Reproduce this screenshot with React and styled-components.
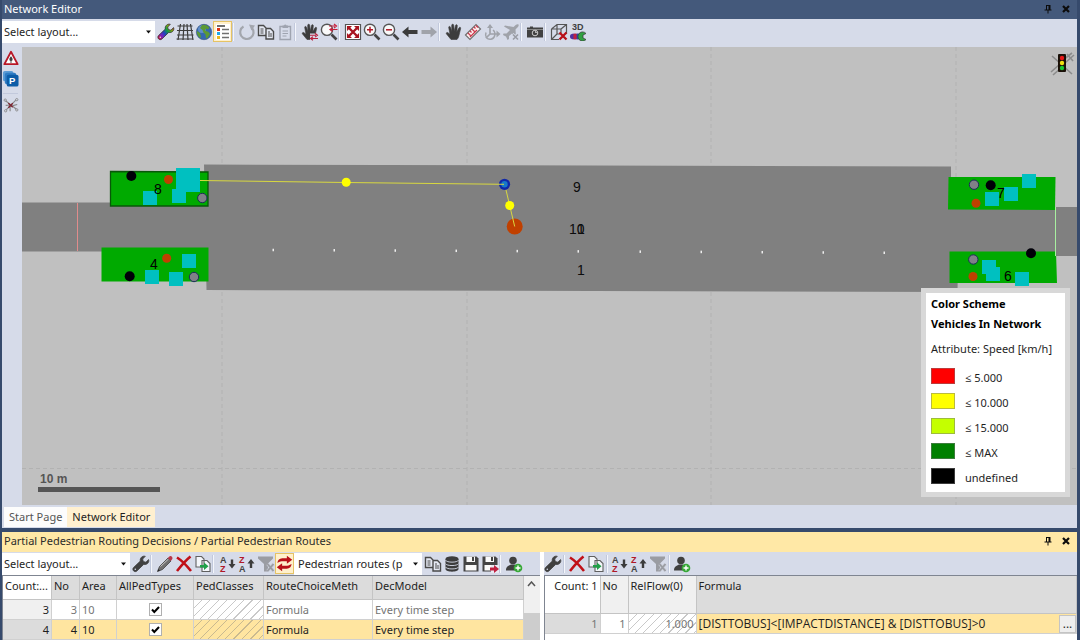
import React from 'react';
import styled, { createGlobalStyle } from 'styled-components';

const GlobalStyle = createGlobalStyle`
  * {
    box-sizing: border-box;
  }

  body {
    margin: 0;
    font-family: 'Noto Sans', 'Open Sans', sans-serif;
    font-size: 11px;
    line-height: 16px;
    color: #1e1e1e;
  }

  button,
  select,
  input {
    font: inherit;
    color: inherit;
  }
`;

const Page = styled.div`
  display: flex;
  flex-direction: column;
  min-height: 100vh;
  background: #fff;
`;

const Frame = styled.section`
  display: flex;
  flex-direction: column;
  flex: ${(props) => (props.$grow ? '1 1 auto' : '0 0 auto')};
  border: solid #364a6c;
  border-width: ${(props) => (props.$grow ? '0 3px 0 2px' : '4px 3px 0 2px')};
  background: #d6dbe9;
`;

const TitleBar = styled.header`
  display: flex;
  align-items: center;
  height: ${(props) => (props.$active ? '20px' : '19px')};
  padding: 0 6px 2px 2px;
  background: ${(props) => (props.$active ? '#ffe8a6' : '#44597b')};
  color: ${(props) => (props.$active ? '#2b2b2b' : '#fff')};
`;

const Title = styled.h2`
  flex: 1;
  margin: 0;
  font-size: 11px;
  font-weight: 400;
  white-space: nowrap;
`;

const TitleButton = styled.button`
  display: flex;
  padding: 0;
  margin-left: 8px;
  border: 0;
  background: none;
  color: #0c0c0c;
`;

const Toolbar = styled.div`
  display: flex;
  align-items: center;
  height: ${(props) => (props.$tall ? '28px' : '23px')};
  padding-bottom: ${(props) => (props.$tall ? '3px' : '0')};
`;

const ToolButton = styled.button`
  display: flex;
  flex: none;
  align-items: center;
  justify-content: center;
  width: 19px;
  height: 21px;
  padding: 0;
  border: 1px solid ${(props) => (props.$on ? '#e5c365' : 'transparent')};
  background: ${(props) => (props.$on ? '#fff0cc' : 'none')};

  svg {
    flex: none;
  }
`;

const Separator = styled.span`
  flex: none;
  width: ${(props) => (props.$wide ? '6px' : '5px')};
  height: 18px;
  border-left: 1px solid #c2c9dc;
  box-shadow: inset 1px 0 0 #f4f6fb;
`;

const SelectWrap = styled.label`
  position: relative;
  flex: none;
  width: ${(props) => (props.$wide ? '153px' : '128px')};
  margin-right: 1px;

  select {
    display: block;
    width: 100%;
    height: 22px;
    padding: 0 16px 0 ${(props) => (props.$inset ? '4px' : '2px')};
    border: 0;
    border-radius: 0;
    background: #fff;
    appearance: none;
  }

  svg {
    position: absolute;
    right: 4px;
    top: 9px;
    pointer-events: none;
  }
`;

const Workspace = styled.div`
  display: flex;
  flex: 1;
`;

const SideBar = styled.div`
  display: flex;
  flex-direction: column;
  align-items: center;
  width: 20px;
  padding-right: 3px;
`;

const SideSeparator = styled.span`
  width: 15px;
  height: 5px;
  border-bottom: 1px solid #c2c9dc;
`;

const Canvas = styled.div`
  position: relative;
  flex: 1;
  min-height: 260px;
  background: #c0c0c0;
`;

const NetworkSvg = styled.svg`
  position: absolute;
  width: 100%;
  height: 100%;
  font-family: 'Liberation Sans', Arial, sans-serif;
  font-size: 14px;
`;

const Legend = styled.aside`
  position: absolute;
  right: 7px;
  bottom: 8px;
  width: 149px;
  padding: 1px 5px 2px;
  border: 5px solid #d8d8d8;
  background: #fff;
  background-clip: padding-box;
`;

const LegendTitle = styled.div`
  font-weight: 700;
  line-height: 20px;
  color: #000;
`;

const LegendAttribute = styled.div`
  margin: 6px 0 7px;
  line-height: 18px;
  white-space: nowrap;
`;

const LegendList = styled.ul`
  margin: 0;
  padding: 0;
  list-style: none;
`;

const LegendItem = styled.li`
  display: flex;
  gap: 10px;
  height: 25px;
  line-height: 25px;
`;

const Swatch = styled.span`
  width: 24px;
  height: 16px;
  margin-top: 3px;
  border: 1px solid rgba(120, 120, 120, 0.5);
  background: ${(props) => props.$color};
`;

const Tabs = styled.nav`
  display: flex;
  height: 23px;
  padding: 2px 2px 1px;
`;

const Tab = styled.a`
  padding: 0 5px;
  line-height: 20px;
  color: ${(props) => (props.$on ? '#1e1e1e' : '#555')};
  background: ${(props) => (props.$on ? '#fff0d0' : '#fcfcfc')};
  text-decoration: none;
`;

const Lists = styled.div`
  display: grid;
  grid-template-columns: 1fr 1fr;
`;

const ListPane = styled.div`
  display: flex;
  flex-direction: column;
  min-width: 0;
  border-left: ${(props) => (props.$second ? '4px solid #fff' : '0')};
`;

const GridArea = styled.div`
  display: flex;
  flex: 1;
  border-top: 1px solid #7f8591;
  border-left: 1px solid #7f8591;
  background: #fff;
  overflow: hidden;
`;

const Table = styled.table`
  flex: 1;
  align-self: flex-start;
  min-width: 0;
  table-layout: fixed;
  border-collapse: separate;
  border-spacing: 0;
`;

const HeadCell = styled.th`
  height: ${(props) => (props.$tall ? '38px' : '24px')};
  padding: 2px 2px 0;
  border-right: 1px solid #c4c4c4;
  border-bottom: 1px solid #c4c4c4;
  background: ${(props) => props.$bg || '#dcdcdc'};
  font-weight: 400;
  text-align: ${(props) => (props.$right ? 'right' : 'left')};
  vertical-align: top;
  white-space: nowrap;
  overflow: hidden;
`;

const cellColors = {
  plain: '#fff',
  picked: '#ffe5a0',
  head: '#dcdcdc',
  soft: '#f0f0f0',
};

const Cell = styled.td`
  height: 20px;
  padding: 0 2px;
  border-right: 1px solid #d0d0d0;
  border-bottom: 1px solid #d0d0d0;
  background-color: ${(props) => cellColors[props.$tone || 'plain']};
  background-image: ${(props) =>
    props.$hatched
      ? 'repeating-linear-gradient(135deg, transparent 0 5px, rgba(120, 120, 120, 0.4) 5px 6px)'
      : 'none'};
  color: ${(props) => (props.$dim ? '#757575' : '#1e1e1e')};
  text-align: ${(props) => props.$align || 'left'};
  white-space: nowrap;
`;

const CheckBox = styled.input`
  display: block;
  width: 13px;
  height: 13px;
  margin: 0 auto;
  border: 1px solid #b0b0b0;
  background: #fff
    url("data:image/svg+xml,%3Csvg xmlns='http://www.w3.org/2000/svg' viewBox='0 0 11 11'%3E%3Cpath d='M2 5.5 4.3 8 9 3' fill='none' stroke='black' stroke-width='2'/%3E%3C/svg%3E");
  appearance: none;
`;

const ScrollBar = styled.div`
  display: flex;
  flex-direction: column;
  width: 16px;
  background: #f0f0f0;
`;

const ScrollButton = styled.button`
  display: flex;
  justify-content: center;
  width: 100%;
  height: 37px;
  padding: 5px 0 0;
  border: 0;
  background: none;
`;

const ScrollThumb = styled.div`
  flex: 1;
  background: #cdcdcd;
`;

const FormulaBox = styled.div`
  display: flex;
  justify-content: space-between;
  font-family: 'Open Sans', sans-serif;
  font-size: 12px;
  line-height: 18px;
`;

const MoreButton = styled.button`
  width: 17px;
  height: 18px;
  margin-right: -2px;
  padding: 0;
  border: 1px solid #c4c4c4;
  background: #eee;
  line-height: 14px;
`;

const Footer = styled.div`
  height: 2px;
`;

const Icon = ({ children, size = 18 }) => (
  <svg width={size} height={size} viewBox="0 0 18 18" fill="none" aria-hidden="true">
    {children}
  </svg>
);

const WRENCH =
  'M16.6 4.6 13.9 7.2 11.3 6.6 10.7 4 13.3 1.3C10.5.5 7.6 2.8 8.3 6.1L1.5 12.6C.6 13.6.7 15 1.6 15.9 2.5 16.8 3.9 16.9 4.9 16L11.7 9.4C15 10.2 17.6 7.4 16.6 4.6Z';

const Wrench = ({ rainbow }) => (
  <Icon>
    <defs>
      <linearGradient id="spectrum" x1="1" y1="15" x2="16" y2="3" gradientUnits="userSpaceOnUse">
        <stop offset="0" stopColor="#d01030" />
        <stop offset="0.22" stopColor="#7a20c0" />
        <stop offset="0.42" stopColor="#2040c0" />
        <stop offset="0.62" stopColor="#10a040" />
        <stop offset="0.8" stopColor="#80b010" />
        <stop offset="1" stopColor="#c02010" />
      </linearGradient>
    </defs>
    <path
      d={WRENCH}
      fill={rainbow ? 'url(#spectrum)' : '#404040'}
      stroke={rainbow ? '#333' : '#404040'}
      strokeWidth="0.8"
    />
    <circle cx="3.3" cy="14.3" r="0.8" fill="#d6dbe9" />
  </Icon>
);

const GridIcon = () => (
  <Icon>
    <path
      d="M4.5 1 2 17M8 1 7 17M11 1l1 16M14.5 1 17 17M1.5 3h15M1 7.5h16M1 12h16.5M.5 16h17"
      stroke="#3c3c3c"
      strokeWidth="1.2"
    />
  </Icon>
);

const Globe = () => (
  <Icon>
    <circle cx="9" cy="9" r="7.7" fill="#3568b0" />
    <circle cx="7" cy="6" r="4" fill="#7ba8dc" opacity="0.6" />
    <path
      d="M7 2c3-1 6 .5 7.5 2.5L13 6.5l-2-1-1 2 3.5 1.5 1.5 2-2.5 4-1.5.5-.5-4-2-2L7.5 7 5 5ZM2 8l3 2 1 4-1 1C3 13.5 1.5 11 2 8Z"
      fill="#5c9a34"
    />
    <circle cx="9" cy="9" r="7.7" stroke="#3b5278" strokeWidth="0.6" />
  </Icon>
);

const LegendIcon = () => (
  <Icon>
    <path d="M2 1h14v16H2Z" fill="#fff" />
    <path d="M3 3h8" stroke="#404040" strokeWidth="1.5" />
    <path d="M3 6.5h3" stroke="#e03010" strokeWidth="3" />
    <path d="M3 10.5h3" stroke="#20a8e8" strokeWidth="3" />
    <path d="M3 14.5h3" stroke="#e8b820" strokeWidth="3" />
    <path d="M8 6.5h7M8 10.5h7M8 14.5h7" stroke="#707070" strokeWidth="1.3" />
  </Icon>
);

const Refresh = () => (
  <Icon>
    <path d="M5.5 3.5A6.7 6.7 0 1 0 14 5" stroke="#a3a6ad" strokeWidth="2.2" />
    <path d="M11 1.5 17 2.5 13.5 7.5Z" fill="#a3a6ad" />
  </Icon>
);

const Copy = () => (
  <Icon>
    <path
      d="M1.5 2.5h5l2.5 2.5v7.5H1.5ZM9 5.5h4.5l3 3v7.5H9Z"
      fill="#e4e8f2"
      stroke="#4a4a4a"
      strokeWidth="1.4"
    />
    <path d="M3.5 6h3M3.5 8h3M3.5 10h3M11 9h2M11 11h4M11 13h4" stroke="#4a4a4a" />
  </Icon>
);

const Clipboard = () => (
  <Icon>
    <path d="M4 3.5h10.5V16.5H4Z" stroke="#9fa4b0" strokeWidth="1.4" />
    <path d="M6.5 5V2.5h1.5a1.3 1.3 0 0 1 2.5 0h1.5V5Z" fill="#9fa4b0" />
    <path d="M6.5 8h5.5M6.5 10.5h5.5M6.5 13h4" stroke="#9fa4b0" />
  </Icon>
);

const HAND =
  'M6 16.5 1.5 11C.7 10 2 8.8 3 9.7L5 11.3 3.7 4.5C3.5 3.2 5.2 3 5.5 4.2L6.8 8.5 6.7 2.3C6.7.9 8.6.9 8.7 2.3L9.2 8.3 10.5 2.4C10.8 1.2 12.5 1.5 12.3 2.8L11.8 8.8 14 4.8C14.7 3.7 16.1 4.4 15.6 5.7L14 12.5C13.5 14.7 12.8 15.5 12 16.5Z';

const Hand = ({ arrows }) => (
  <Icon>
    <path d={HAND} fill="#3c3c3c" stroke="#3c3c3c" strokeWidth="0.6" />
    {arrows && (
      <>
        <path d="M9 10.5h9v7H9Z" fill="#d6dbe9" />
        <path
          d="M9 12.2h6M17 15.5h-6.5M14 10.3l2.5 1.9-2.5 1.9M12 13.8l-2.5 1.7L12 17.3"
          stroke="#b8203c"
          strokeWidth="1.1"
        />
      </>
    )}
  </Icon>
);

const Magnifier = ({ kind }) => (
  <Icon>
    <path d="m11.5 11.5 5 5" stroke="#444" strokeWidth="2.6" />
    <circle cx="7" cy="6.8" r="5.6" fill="#fafafa" stroke="#555" strokeWidth="1.4" />
    {kind === 'in' && <path d="M4 6.8h6M7 3.8v6" stroke="#b01828" strokeWidth="1.5" />}
    {kind === 'out' && <path d="M4 6.8h6" stroke="#b01828" strokeWidth="1.5" />}
    {kind === 'swap' && (
      <path
        d="M9 3h6M17.5 6.5H11M14 1l2.5 2L14 5M12.5 4.8 10 6.5l2.5 1.9"
        stroke="#c8203c"
        strokeWidth="1.2"
      />
    )}
  </Icon>
);

const Extents = () => (
  <Icon>
    <path d="M1.5 1.5h15v15h-15Z" fill="#fff" stroke="#555" strokeWidth="1.2" />
    <path d="m4 4 10 10M14 4 4 14" stroke="#a81420" strokeWidth="2.4" />
    <path
      d="M3 3h5L3 8ZM15 3h-5l5 5ZM3 15h5L3 10ZM15 15h-5l5-5Z"
      fill="#a81420"
    />
  </Icon>
);

const Arrow = ({ right }) => (
  <Icon>
    <path
      d={right ? 'M17 9 10.5 3.5V7H1.5v4h9v3.5Z' : 'M1 9l6.5-5.5V7h9v4h-9v3.5Z'}
      fill={right ? '#a0a3aa' : '#3c3c3c'}
    />
  </Icon>
);

const Ruler = () => (
  <Icon>
    <path d="M1.5 12 12 1.5 16.5 6 6 16.5Z" fill="#fff0f0" stroke="#707070" strokeWidth="1.2" />
    <path
      d="m4 10 2.5 2.5M6 8l1.5 1.5M8 6l2.5 2.5M10 4l1.5 1.5M12 2.5l2 2M6 14l7-7"
      stroke="#c8384c"
      strokeWidth="1.3"
    />
  </Icon>
);

const Orbit = () => (
  <Icon>
    <path d="M7 2v9h8M7 11l-4 4" stroke="#a0a3aa" strokeWidth="1.7" />
    <path d="m4 5 3-4 3 4M13.5 7.5l4 3.5-4 3.5" fill="#a0a3aa" />
    <path d="M10 7C13 9 12.5 15.5 8 16.2 4 16.8 1.5 13.5 3 9.5" stroke="#a0a3aa" strokeWidth="1.5" />
  </Icon>
);

const Plane = () => (
  <Icon>
    <path
      d="M16.5 1.5C15 .7 13.5 2 11.5 4L3 2.5 2 3.5l6 3.5-3.5 3.5H1.5L1 12l3 1.5L5.5 17 7 16v-3l3-2.5 3 5 1-1L13.5 6.5C15.5 4.5 17.3 3 16.5 1.5Z"
      fill="#a0a3aa"
    />
    <path d="m10.5 11 5.5 5.5M16 11l-5.5 5.5" stroke="#d6dbe9" strokeWidth="3" />
    <path d="m11 11.5 5 5M16 11.5l-5 5" stroke="#999ca4" strokeWidth="1.6" />
  </Icon>
);

const Camera = () => (
  <Icon>
    <path d="M1 4.5h3v-1h3v1h10V14.5H1Z" fill="#424242" />
    <path d="M1 6.5h16" stroke="#888" />
    <circle cx="9" cy="10" r="2.8" fill="#424242" stroke="#ccc" />
    <path d="M9 8.7c.8 0 1.3.5 1.3 1.3" stroke="#fff" />
  </Icon>
);

const Cube = () => (
  <Icon>
    <path
      d="M1.5 6 7 1.5h9.5v9M1.5 6v10.5H9M1.5 6H11v4M11 6l5.5-4.5M1.5 16.5 7 11V1.5M7 11h3"
      stroke="#555"
      strokeWidth="1.2"
    />
    <path d="m9.5 9.5 7 7M16.5 9.5l-7 7" stroke="#b81018" strokeWidth="2.3" />
  </Icon>
);

const ThreeD = () => (
  <Icon>
    <text x="3" y="7" fontSize="9" fontWeight="700" fontFamily="Liberation Sans, sans-serif" fill="#404040">
      3D
    </text>
    <path d="M1 13.5C1 11 3 10.7 4.5 10.7H9v5.6H4.5C3 16.3 1 16 1 13.5Z" fill="#5030a0" />
    <path d="M4.5 10.7h3v5.6h-3Z" fill="#c02040" />
    <path d="M8 10.7h3v5.6H8Z" fill="#2050b0" />
    <path d="M17 10.5a4.6 4.6 0 1 0 0 6l-3-1.5v-3Z" fill="#30a040" stroke="#333" strokeWidth="0.7" />
  </Icon>
);

const Pencil = () => (
  <Icon>
    <path d="M1.5 16.5 3.5 11.5 12 3l3 3-8.5 8.5Z" fill="#707070" stroke="#444" strokeWidth="0.8" />
    <path d="m4.5 11.5 8-7.5" stroke="#c8c8c8" />
    <path d="m11.7 3 2-1.7c1.5-.8 3.5 1.2 2.6 2.7L14.8 6Z" fill="#b83848" />
    <path d="m1.5 16.5 1-2.5 1.5 1.5Z" fill="#222" />
  </Icon>
);

const Cross = () => (
  <Icon>
    <path d="M2 2.5C6 5 12 11 16 16M15.5 1.5C11 5 6 11 2 16" stroke="#c01018" strokeWidth="2.6" />
  </Icon>
);

const Duplicate = () => (
  <Icon>
    <path
      d="M2 1.5h5.5L10 4v8H2ZM8 5.5h5l3 3v8H8Z"
      fill="#f4f6fa"
      stroke="#606060"
      strokeWidth="1.1"
    />
    <path d="M6 10h4V7.5l4.500 3.700L10 15v-2.500H6Z" fill="#20a048" />
  </Icon>
);

const Sort = ({ up }) => (
  <Icon>
    <g fontSize="9" fontWeight="700" fontFamily="Liberation Sans, sans-serif">
      <text x="1" y="7.5" fill={up ? '#b01828' : '#444'}>
        {up ? 'Z' : 'A'}
      </text>
      <text x="1" y="16.5" fill={up ? '#444' : '#b01828'}>
        {up ? 'A' : 'Z'}
      </text>
    </g>
    <path
      d={up ? 'M13 4l3.5 4.5h-2.3V13h-2.4V8.5H9.5Z' : 'M13 13.5 9.5 9h2.3V4.5h2.4V9h2.3Z'}
      fill="#3c3c3c"
    />
  </Icon>
);

const Filter = () => (
  <Icon>
    <path d="M1 1.5h15v2L11 8.5v8H7V9L1 3.5Z" fill="#9a9ca2" />
    <path d="m10.5 9 6 7M16.5 9l-6 7" stroke="#c6cad4" strokeWidth="3" />
    <path d="m10.5 9 6 7M16.5 9l-6 7" stroke="#9a9ca2" strokeWidth="1.7" />
  </Icon>
);

const Swap = () => (
  <Icon size={17}>
    <path
      d="M1.5 8.5C2 4.5 4.5 3.5 8 3.5h3.5V.8L17.2 5l-5.7 4.2V6.700H8C5.5 6.700 4 7 1.5 8.5ZM16.5 9.5C16 13.5 13.5 14.5 10 14.5H6.5v2.7L.8 13l5.7-4.2v2.5H10c2.5 0 4-.3 6.5-1.8Z"
      fill="#b81018"
    />
  </Icon>
);

const Database = () => (
  <Icon>
    <path d="M2.5 4v10c0 3.5 13 3.5 13 0V4Z" fill="#3c3c3c" />
    <ellipse cx="9" cy="4" rx="6.5" ry="2.7" fill="#3c3c3c" />
    <path
      d="M2.5 5.2c1 2.6 12 2.6 13 0M2.5 8.6c1 2.6 12 2.6 13 0M2.5 12c1 2.6 12 2.6 13 0"
      stroke="#c9cedb"
    />
  </Icon>
);

const Disk = ({ out }) => (
  <Icon>
    <path d="M1.5 1.5h13l2 2v13h-15Z" fill="#444" />
    <path d="M4.5 1.5h8.5v5.5H4.5ZM3.5 10h11v5.5h-11Z" fill="#fafafa" />
    <path d="M10 2h2v4h-2Z" fill="#444" />
    {out && (
      <>
        <path d="M10 10h8v8h-8Z" fill="#e8eaf2" />
        <path d="M9 12.5h4V10l5 4-5 4v-2.5H9Z" fill="#c02040" />
      </>
    )}
  </Icon>
);

const AddUser = () => (
  <Icon>
    <circle cx="8" cy="5.5" r="3.8" fill="#404040" />
    <path d="M1 15.5c0-4 2.5-4.5 5-6h4c2.5 1.5 5 2 5 6Z" fill="#404040" />
    <circle cx="13" cy="13" r="4.3" fill="#38a838" />
    <path d="M10.5 13h5M13 10.5v5" stroke="#fff" strokeWidth="1.4" />
  </Icon>
);

const Warning = () => (
  <Icon size={16}>
    <path d="M9 2 16.5 16h-15Z" fill="#fff" stroke="#b81828" strokeWidth="2" strokeLinejoin="round" />
    <path d="M9 7c1.5 1.5 1.8 2.5 1.8 3.7A1.8 1.8 0 0 1 7.2 10.7C7.2 9.5 7.5 8.5 9 7ZM8.5 12h1v2.5h-1Z" fill="#404040" />
  </Icon>
);

const Parking = () => (
  <Icon size={17}>
    <rect x="1" y="1" width="11" height="11" rx="2" fill="#5b9bd5" />
    <rect x="3" y="3" width="12" height="12" rx="2" fill="#2f7cc4" />
    <rect x="5" y="5" width="12.5" height="12.5" rx="2" fill="#0d5da8" />
    <text x="7.5" y="15" fontSize="10" fontWeight="700" fontFamily="Liberation Sans, sans-serif" fill="#fff">
      P
    </text>
  </Icon>
);

const Nodes = () => (
  <Icon size={16}>
    <path d="M2.5 4 15.5 14M3 15 15 3M8 9 8 16M10 10l6-1.5M3 9.5l6-.5" stroke="#888" strokeWidth="1.3" />
    <path d="m6 7 5 4.5M6 12l5-5" stroke="#7c2430" strokeWidth="1.5" />
    <g fill="#d6dbe9" stroke="#888">
      <circle cx="2.5" cy="3.5" r="1.3" />
      <circle cx="15.5" cy="3" r="1.3" />
      <circle cx="3" cy="15.5" r="1.3" />
      <circle cx="15.5" cy="14.5" r="1.3" />
    </g>
  </Icon>
);

const Pin = () => (
  <svg width="10" height="10" viewBox="0 0 10 10" aria-hidden="true">
    <path d="M3 1.5h4M3.5 1v5M1.5 6h7M5 6v3.5" stroke="currentColor" fill="none" />
    <path d="M5.5 1h2v5h-2Z" fill="currentColor" />
  </svg>
);

const Close = () => (
  <svg width="10" height="10" viewBox="0 0 10 10" aria-hidden="true">
    <path d="m2 2 6 6M8 2 2 8" stroke="currentColor" strokeWidth="2.2" />
  </svg>
);

const Header = ({ title, active }) => (
  <TitleBar $active={active}>
    <Title>{title}</Title>
    <TitleButton aria-label="Pin">
      <Pin />
    </TitleButton>
    <TitleButton aria-label="Close">
      <Close />
    </TitleButton>
  </TitleBar>
);

const DropDown = ({ label, text, wide, inset }) => (
  <SelectWrap $wide={wide} $inset={inset}>
    <select aria-label={label}>
      <option>{text}</option>
    </select>
    <svg width="5" height="4" viewBox="0 0 5 4" aria-hidden="true">
      <path d="M0 .5h5L2.5 3.5Z" fill="#111" />
    </svg>
  </SelectWrap>
);

const Tool = ({ label, on, children }) => (
  <ToolButton type="button" aria-label={label} $on={on}>
    {children}
  </ToolButton>
);

const ROAD = '#808080';
const STOP = '#00aa00';

// one entry per platform: outline, then squares [x, y, size] and circles [x, y, kind]
const platforms = [
  {
    id: 8,
    label: [154, 194],
    outline: '110.5,171.5 208,172 208,206 110.5,206',
    selected: true,
    squares: [[176, 168, 24], [143, 191, 14], [172, 189, 14]],
    circles: [[131.3, 176, 'black'], [168.5, 179.5, 'orange'], [202.3, 198, 'gray']],
  },
  {
    id: 4,
    label: [150, 269],
    outline: '101.5,247.5 208.5,247.5 208.5,281.5 101.5,281.5',
    squares: [[182, 254, 14], [145, 270, 14], [169, 272, 14]],
    circles: [[129.7, 276.3, 'black'], [166.7, 258.2, 'orange'], [194, 277, 'gray']],
  },
  {
    id: 7,
    label: [997, 198],
    outline: '948.5,177 1055.5,177 1055,210 948,209.5',
    squares: [[1022, 174, 14], [1004, 187, 14], [985, 192, 14]],
    circles: [[974, 184.7, 'gray'], [990.7, 185.3, 'black'], [976, 203.3, 'orange']],
  },
  {
    id: 6,
    label: [1004, 281],
    outline: '949.5,251.5 1056,251.5 1057,283 949.5,283',
    squares: [[982, 260, 14], [986, 267, 14], [1015, 272, 14]],
    circles: [[973.3, 259.5, 'gray'], [1031, 253.3, 'black'], [973, 276.5, 'orange']],
  },
];

const circleStyle = {
  black: { r: 5, fill: '#000008' },
  orange: { r: 4.5, fill: '#c04000' },
  gray: { r: 4.7, fill: '#808088', stroke: '#1c2c58' },
};

const markers = [273, 334, 395, 456, 517, 578, 640, 701, 762, 823, 884];

const Network = () => (
  <NetworkSvg viewBox="22 47 1055 458" preserveAspectRatio="xMinYMin slice" role="img" aria-label="Network">
    <path
      d="M222 47v458M467 47v458M711 47v458M956 47v458M22 468.5h1055"
      stroke="#b2b2b2"
      strokeDasharray="4 3"
    />
    <g fill={ROAD}>
      <path d="M22 202.5h190v49H22ZM945 207h132v49H945Z" />
      <path d="M204 164.5 951 166.5 951 207 958 256 957.5 292 206.5 290Z" />
    </g>
    <path d="M77.5 203v48" stroke="#e08c8c" />
    {platforms.map((p) => (
      <g key={p.id}>
        <polygon
          points={p.outline}
          fill={STOP}
          stroke={p.selected ? '#085808' : 'none'}
          strokeWidth="1.3"
        />
        {p.circles.map(([x, y, kind]) => (
          <circle key={x} cx={x} cy={y} {...circleStyle[kind]} />
        ))}
        {p.squares.map(([x, y, size]) => (
          <rect key={x} x={x} y={y} width={size} height={size} fill="#00c0c0" />
        ))}
        <text x={p.label[0]} y={p.label[1]}>
          {p.id}
        </text>
      </g>
    ))}
    <path d="M1055.5 207v49" stroke="#a8f0a0" />
    {markers.map((x) => (
      <rect key={x} x={x - 0.5} y={247.5 + x / 220} width="1.5" height="2.5" fill="#eee" />
    ))}
    <circle cx="514.7" cy="226.5" r="8" fill="#c04000" />
    <circle cx="504.5" cy="184.3" r="5.6" fill="#1028a8" />
    <circle cx="504.5" cy="184.3" r="3.2" fill="#1878c8" />
    <path d="M200 180.5 346 182.5 504 184.3M506 190 509.7 205.5 514.7 226.5" fill="none" stroke="#d8d840" />
    <g fill="#ffff00">
      <circle cx="346.2" cy="182.3" r="4.5" />
      <circle cx="509.7" cy="205.5" r="4.5" />
    </g>
    <g fill="#0c0c0c">
      <text x="573" y="192">9</text>
      <text x="569" y="234">10</text>
      <text x="577" y="234">1</text>
      <text x="577" y="275">1</text>
    </g>
    <text x="40" y="483" fontSize="12" fontWeight="700" fill="#555">
      10 m
    </text>
    <path d="M38 487h122v5H38Z" fill="#555" />
    <path
      d="M1052 56l20 18M1051 72l9-8M1053 75l9-8M1063 60l9-7M1065 63l9-8M1067 54l6 7"
      stroke="#8c8c8c"
      strokeWidth="1.6"
    />
    <rect x="1058" y="54" width="8" height="18" rx="1" fill="#1a1008" />
    <circle cx="1062" cy="58" r="2.2" fill="#e81818" />
    <circle cx="1062" cy="63" r="2.2" fill="#f0e010" />
    <circle cx="1062" cy="68" r="2.2" fill="#18c830" />
  </NetworkSvg>
);

const classes = [
  ['#ff0000', '≤ 5.000'],
  ['#ffff00', '≤ 10.000'],
  ['#c4ff00', '≤ 15.000'],
  ['#008000', '≤ MAX'],
  ['#000000', 'undefined'],
];

const ColorScheme = () => (
  <Legend>
    <LegendTitle>Color Scheme</LegendTitle>
    <LegendTitle>Vehicles In Network</LegendTitle>
    <LegendAttribute>Attribute: Speed [km/h]</LegendAttribute>
    <LegendList>
      {classes.map(([color, text]) => (
        <LegendItem key={text}>
          <Swatch $color={color} />
          {text}
        </LegendItem>
      ))}
    </LegendList>
  </Legend>
);

const decisions = [
  { no: 3, area: 10, method: 'Formula', model: 'Every time step' },
  { no: 4, area: 10, method: 'Formula', model: 'Every time step', picked: true },
];

const DecisionTable = () => (
  <Table>
    <colgroup>
      <col width="49" />
      <col width="28" />
      <col width="37" />
      <col width="77" />
      <col width="70" />
      <col width="109" />
      <col />
    </colgroup>
    <thead>
      <tr>
        <HeadCell $bg="#fff">Count:...</HeadCell>
        <HeadCell>No</HeadCell>
        <HeadCell>Area</HeadCell>
        <HeadCell>AllPedTypes</HeadCell>
        <HeadCell>PedClasses</HeadCell>
        <HeadCell>RouteChoiceMeth</HeadCell>
        <HeadCell>DecModel</HeadCell>
      </tr>
    </thead>
    <tbody>
      {decisions.map(({ no, area, method, model, picked }) => {
        const tone = picked ? 'picked' : 'plain';
        return (
          <tr key={no}>
            <Cell $tone={picked ? 'head' : 'soft'} $align="right">
              {no}
            </Cell>
            <Cell $tone={tone} $dim={!picked} $align="right">
              {no}
            </Cell>
            <Cell $tone={tone} $dim={!picked}>
              {area}
            </Cell>
            <Cell $tone={tone}>
              <CheckBox type="checkbox" defaultChecked aria-label={`AllPedTypes ${no}`} />
            </Cell>
            <Cell $tone={tone} $hatched />
            <Cell $tone={tone} $dim={!picked}>
              {method}
            </Cell>
            <Cell $tone={tone} $dim={!picked}>
              {model}
            </Cell>
          </tr>
        );
      })}
    </tbody>
  </Table>
);

const RouteTable = () => (
  <Table>
    <colgroup>
      <col width="56" />
      <col width="28" />
      <col width="68" />
      <col />
    </colgroup>
    <thead>
      <tr>
        <HeadCell $tall $right $bg="#fff">
          Count: 1
        </HeadCell>
        <HeadCell $tall $bg="#f0f0f0">
          No
        </HeadCell>
        <HeadCell $tall $bg="#f0f0f0">
          RelFlow(0)
        </HeadCell>
        <HeadCell $tall>Formula</HeadCell>
      </tr>
    </thead>
    <tbody>
      <tr>
        <Cell $tone="head" $dim $align="right">
          1
        </Cell>
        <Cell $dim $align="right">
          1
        </Cell>
        <Cell $hatched $dim $align="right">
          1.000
        </Cell>
        <Cell $tone="picked">
          <FormulaBox>
            {'[DISTTOBUS]<[IMPACTDISTANCE] & [DISTTOBUS]>0'}
            <MoreButton aria-label="Edit formula">...</MoreButton>
          </FormulaBox>
        </Cell>
      </tr>
    </tbody>
  </Table>
);

const App = () => {
  return (
    <Page>
      <GlobalStyle />
      <Frame $grow>
        <Header title="Network Editor" />
        <Toolbar $tall>
          <DropDown wide label="Layout" text="Select layout..." />
          <Tool label="Graphic parameters"><Wrench rainbow /></Tool>
          <Tool label="Grid"><GridIcon /></Tool>
          <Tool label="Map"><Globe /></Tool>
          <Tool label="Legend" on><LegendIcon /></Tool>
          <Separator />
          <Tool label="Refresh"><Refresh /></Tool>
          <Tool label="Copy"><Copy /></Tool>
          <Tool label="Paste"><Clipboard /></Tool>
          <Separator $wide />
          <Tool label="Synchronize position"><Hand arrows /></Tool>
          <Tool label="Synchronize zoom"><Magnifier kind="swap" /></Tool>
          <Separator />
          <Tool label="Show entire network"><Extents /></Tool>
          <Tool label="Zoom in"><Magnifier kind="in" /></Tool>
          <Tool label="Zoom out"><Magnifier kind="out" /></Tool>
          <Tool label="Previous view"><Arrow /></Tool>
          <Tool label="Next view"><Arrow right /></Tool>
          <Separator $wide />
          <Tool label="Pan"><Hand /></Tool>
          <Tool label="Measure"><Ruler /></Tool>
          <Tool label="Rotate"><Orbit /></Tool>
          <Tool label="Flight"><Plane /></Tool>
          <Separator />
          <Tool label="Screenshot"><Camera /></Tool>
          <Separator />
          <Tool label="Wireframe"><Cube /></Tool>
          <Tool label="3D mode"><ThreeD /></Tool>
        </Toolbar>
        <Workspace>
          <SideBar>
            <Tool label="Hazards"><Warning /></Tool>
            <Tool label="Parking"><Parking /></Tool>
            <SideSeparator />
            <Tool label="Nodes"><Nodes /></Tool>
          </SideBar>
          <Canvas>
            <Network />
            <ColorScheme />
          </Canvas>
        </Workspace>
        <Tabs>
          <Tab href="#start">Start Page</Tab>
          <Tab href="#network" $on>Network Editor</Tab>
        </Tabs>
      </Frame>
      <Frame>
        <Header active title="Partial Pedestrian Routing Decisions / Partial Pedestrian Routes" />
        <Lists>
          <ListPane>
            <Toolbar>
              <DropDown label="List layout" text="Select layout..." />
              <Tool label="Settings"><Wrench /></Tool>
              <Separator />
              <Tool label="Edit"><Pencil /></Tool>
              <Tool label="Delete"><Cross /></Tool>
              <Tool label="Duplicate"><Duplicate /></Tool>
              <Separator $wide />
              <Tool label="Sort ascending"><Sort /></Tool>
              <Tool label="Sort descending"><Sort up /></Tool>
              <Tool label="Filter"><Filter /></Tool>
              <Tool label="Synchronize" on><Swap /></Tool>
              <DropDown inset label="Relation" text="Pedestrian routes (p" />
              <Tool label="Copy cells"><Copy /></Tool>
              <Tool label="Database"><Database /></Tool>
              <Tool label="Save"><Disk /></Tool>
              <Tool label="Export"><Disk out /></Tool>
              <Separator />
              <Tool label="Add pedestrian"><AddUser /></Tool>
            </Toolbar>
            <GridArea>
              <DecisionTable />
              <ScrollBar>
                <ScrollButton aria-label="Scroll up">
                  <svg width="9" height="6" viewBox="0 0 9 6" aria-hidden="true">
                    <path d="m1 5 3.5-4L8 5" fill="none" stroke="#555" strokeWidth="1.5" />
                  </svg>
                </ScrollButton>
                <ScrollThumb />
              </ScrollBar>
            </GridArea>
          </ListPane>
          <ListPane $second>
            <Toolbar>
              <Tool label="Settings"><Wrench /></Tool>
              <Separator />
              <Tool label="Delete"><Cross /></Tool>
              <Tool label="Duplicate"><Duplicate /></Tool>
              <Separator />
              <Tool label="Sort ascending"><Sort /></Tool>
              <Tool label="Sort descending"><Sort up /></Tool>
              <Tool label="Filter"><Filter /></Tool>
              <Separator />
              <Tool label="Add pedestrian"><AddUser /></Tool>
            </Toolbar>
            <GridArea>
              <RouteTable />
            </GridArea>
          </ListPane>
        </Lists>
      </Frame>
      <Footer />
    </Page>
  );
};

export default App;
